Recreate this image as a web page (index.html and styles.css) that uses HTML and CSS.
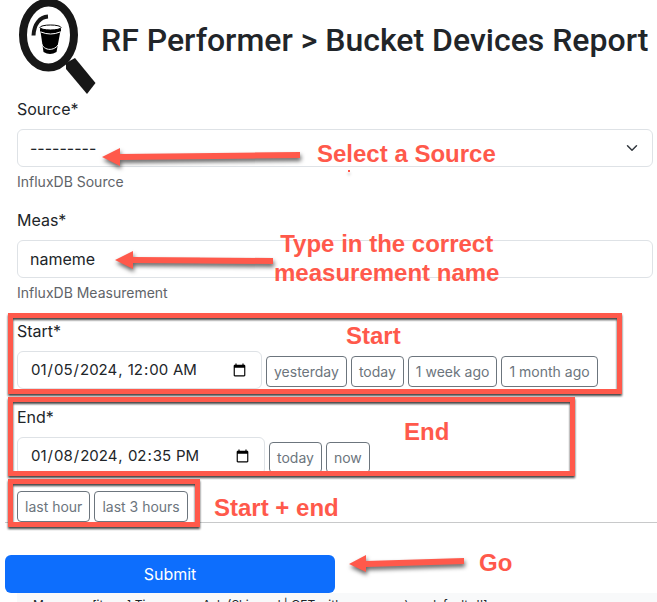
FILE: index.html
```html
<!DOCTYPE html>
<html lang="en-US">
<head>
<meta charset="utf-8">
<meta name="viewport" content="width=device-width, initial-scale=1">
<title>RF Performer &gt; Bucket Devices Report</title>
<link rel="stylesheet" href="styles.css">
</head>
<body>
<header class="page-header">
  <svg class="logo" viewBox="18 0 78 95" aria-hidden="true">
    <ellipse cx="48.500" cy="35" rx="25.500" ry="32.500" fill="#fff" stroke="#171717" stroke-width="8"/>
    <path d="M66 69V63L75 58L95.500 83L87 94Z" fill="#171717"/>
    <path d="M33.500 35.500C34 24 40 17 48 16.500" fill="none" stroke="#171717" stroke-width="4"/>
    <path d="M40 28L43.500 52Q50 56 56.500 52L61 28Z" fill="#000"/>
    <ellipse cx="50.500" cy="27.500" rx="10.500" ry="2.500" fill="#fff" stroke="#000" stroke-width="1"/>
    <path d="M40 29Q50.500 33 61 29V31Q50.500 35 40 31Z" fill="#000"/>
    <path d="M41 32Q50.500 36 60 32M41 42C43 52 57 52 60 41" fill="none" stroke="#fff" stroke-width="1"/>
  </svg>
  <h1>RF Performer &gt; Bucket Devices Report</h1>
</header>
<form>
  <div class="fields">
    <div class="field">
      <label for="source">Source*</label>
      <select id="source" class="control"><option>---------</option></select>
      <small>InfluxDB Source</small>
      <svg class="arrow arrow-source" viewBox="0 0 204 24" aria-hidden="true"><path d="M2 12L20 3V9L200 7V13L20 15V21Z"/></svg>
      <span class="note note-source">Select a Source</span>
      <span class="dot"></span>
    </div>
    <div class="field">
      <label for="meas">Meas*</label>
      <input id="meas" class="control" type="text" value="nameme">
      <small>InfluxDB Measurement</small>
      <svg class="arrow arrow-meas" viewBox="0 0 164 24" aria-hidden="true"><path d="M2 12L20 3V9L160 10V16L20 15V21Z"/></svg>
      <span class="note note-meas">Type in the correct<br>measurement name</span>
    </div>
    <div class="field">
      <label for="start">Start*</label>
      <div class="row">
        <input id="start" class="control date" type="datetime-local" value="2024-01-05T00:00">
        <button type="button" class="quick">yesterday</button>
        <button type="button" class="quick">today</button>
        <button type="button" class="quick">1 week ago</button>
        <button type="button" class="quick">1 month ago</button>
      </div>
      <span class="frame frame-start"></span>
      <span class="note note-start">Start</span>
    </div>
    <div class="field">
      <label for="end">End*</label>
      <div class="row">
        <input id="end" class="control date date-end" type="datetime-local" value="2024-01-08T14:35">
        <button type="button" class="quick">today</button>
        <button type="button" class="quick">now</button>
      </div>
      <span class="frame frame-end"></span>
      <span class="note note-end">End</span>
    </div>
    <div class="row both">
      <button type="button" class="quick">last hour</button>
      <button type="button" class="quick">last 3 hours</button>
      <span class="frame frame-both"></span>
      <span class="note note-both">Start + end</span>
    </div>
  </div>
  <hr>
  <div class="actions">
    <button type="submit" class="submit">Submit</button>
    <svg class="arrow arrow-go" viewBox="0 0 120 24" aria-hidden="true"><path d="M2 12L19 3V9L117 6V12L19 15V20Z"/></svg>
    <span class="note note-go">Go</span>
  </div>
</form>
<div class="log">Measures [items] Time range Ask (Skip and | GET with responses) as default='']</div>
</body>
</html>
```
FILE: styles.css
```css
* { box-sizing: border-box; }
html { overflow: hidden; }
body {
  margin: 0;
  height: 100vh;
  overflow: hidden;
  background: #fff;
  color: #212529;
  font: 16px/24px Inter, "Liberation Sans", sans-serif;
}
.page-header { display: flex; align-items: flex-start; gap: 5px; padding-left: 18px; height: 97px; }
.logo { width: 78px; height: 95px; flex: none; }
h1 { margin: 20px 0 0; font: 500 32px/40px Roboto, "Liberation Sans", sans-serif; white-space: nowrap; }
.fields { padding: 0 4px 0 17px; }
.field { position: relative; margin-bottom: 16px; }
label { display: block; margin-bottom: 8px; }
.control {
  display: block;
  width: 100%;
  height: 38px;
  padding: 6px 12px;
  border: 1px solid #dee2e6;
  border-radius: 6px;
  background: #fff;
  color: #212529;
  font: inherit;
}
select.control {
  appearance: none;
  background: #fff url("data:image/svg+xml,%3Csvg xmlns='http://www.w3.org/2000/svg' viewBox='0 0 16 16'%3E%3Cpath fill='none' stroke='%23343a40' stroke-linecap='round' stroke-linejoin='round' stroke-width='2' d='m2 5 6 6 6-6'/%3E%3C/svg%3E") no-repeat right 14px center / 12px 12px;
}
small { display: block; margin-top: 4px; font-size: 14px; line-height: 21px; color: #5f6469; }
.row { display: flex; align-items: flex-start; gap: 4px; }
.control.date { width: 245px; font-size: 15px; }
.control.date-end { width: 248px; }
.quick {
  height: 31px;
  padding: 4px 7px;
  border: 1px solid #6c757d;
  border-radius: 4px;
  background: #fff;
  color: #6c757d;
  font: 14px/21px Inter, "Liberation Sans", sans-serif;
  white-space: nowrap;
}
.field .quick { margin-top: 5px; }
.both { position: relative; }
hr { margin: 0 0 32px 5px; border: 0; border-top: 1px solid #c8c9ca; }
.actions { position: relative; padding-left: 5px; }
.submit {
  display: block;
  width: 330px;
  height: 38px;
  border: 0;
  border-radius: 6px;
  background: #0d6efd;
  color: #fff;
  font: inherit;
}
.log {
  margin-left: 17px;
  padding: 4px 16px;
  background: #f8f9fa;
  font-size: 12px;
  line-height: 16px;
  white-space: nowrap;
}
.note {
  position: absolute;
  color: #ff594b;
  font: bold 24px/29px "Liberation Sans", Arial, sans-serif;
  white-space: nowrap;
  text-align: center;
  pointer-events: none;
}
.arrow { position: absolute; height: 24px; fill: #ff594b; overflow: visible; filter: drop-shadow(1px 3px 2px #0009); pointer-events: none; }
.frame {
  position: absolute;
  border: 5px solid #ff594b;
  filter: drop-shadow(0 2px 1px #000b);
  pointer-events: none;
}
.arrow-source { left: 83px; top: 48px; width: 204px; }
.note-source { left: 300px; top: 42px; }
.dot { position: absolute; left: 331px; top: 73px; width: 2px; height: 2px; background: #ff594b; box-shadow: 0 3px 3px #0004; }
.arrow-meas { left: 96px; top: 40px; width: 164px; }
.note-meas { left: 257px; top: 21px; }
.frame-start { left: -9px; top: -6px; width: 614px; height: 81px; }
.note-start { left: 329px; top: 2px; }
.frame-end { left: -9px; top: -8px; width: 567px; height: 79px; }
.note-end { left: 387px; top: 12px; }
.frame-both { left: -9px; top: -12px; width: 192px; height: 48px; }
.note-both { left: 197px; top: 2px; }
.arrow-go { left: 347px; top: -3px; width: 120px; }
.note-go { left: 479px; top: -7px; }
```
